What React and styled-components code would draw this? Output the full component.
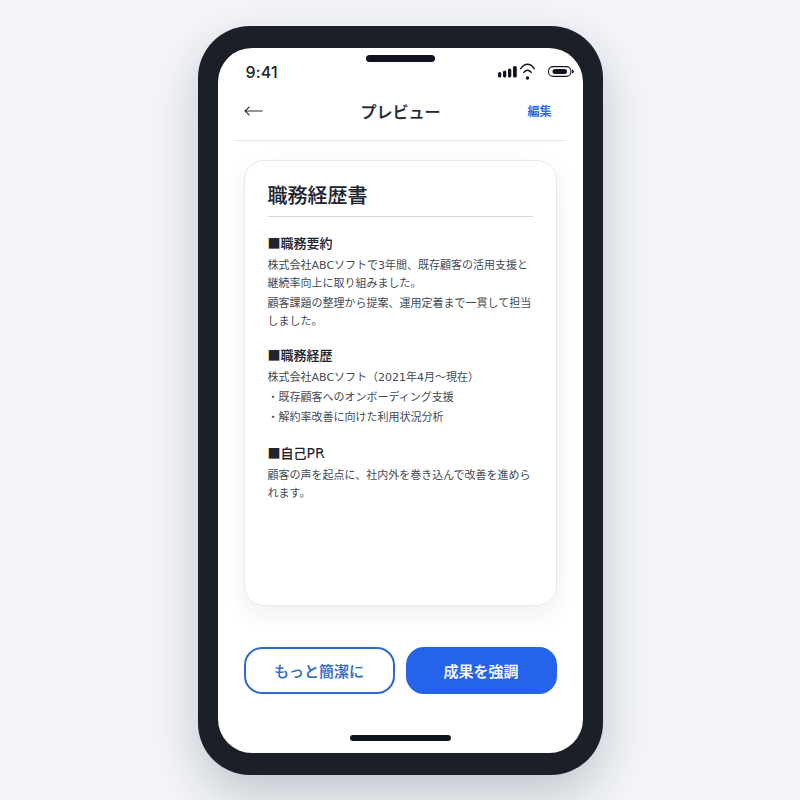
import React from 'react';
import styled, { createGlobalStyle } from 'styled-components';

const GlobalStyle = createGlobalStyle`
  html, body {
    margin: 0;
    padding: 0;
    height: 100%;
  }
  body {
    background: #f3f5f9;
    font-family: 'Noto Sans CJK JP', sans-serif;
    color: #1a1f29;
  }
  * { box-sizing: border-box; }
`;

const Page = styled.div`
  width: 800px;
  height: 800px;
  display: flex;
  align-items: center;
  justify-content: center;
  overflow: hidden;
`;

const Phone = styled.div`
  width: 405px;
  height: 749px;
  padding: 22px 20px;
  border-radius: 52px;
  background: #1b1f28;
  box-shadow: 0 20px 50px rgba(20, 28, 45, 0.22);
`;

const Screen = styled.div`
  position: relative;
  width: 100%;
  height: 100%;
  border-radius: 34px;
  background: #fff;
  overflow: hidden;
  display: flex;
  flex-direction: column;
`;

const Notch = styled.div`
  position: absolute;
  top: 7px;
  left: 148px;
  width: 69px;
  height: 7px;
  border-radius: 4px;
  background: #0f1420;
`;

const StatusBar = styled.div`
  height: 40px;
  padding: 8px 9px 0 28px;
  display: flex;
  justify-content: space-between;
  align-items: center;
`;

const Clock = styled.span`
  font-family: Inter, sans-serif;
  font-size: 16px;
  font-weight: 500;
  line-height: 20px;
  letter-spacing: 0.2px;
`;

const StatusIcons = styled.div`
  display: flex;
  align-items: center;
  gap: 3px;
`;

const BatterySlot = styled.span`
  display: flex;
  margin-left: 10px;
`;

const NavBar = styled.header`
  height: 53px;
  margin: 0 18px;
  padding: 0 7px 6px 8px;
  display: grid;
  grid-template-columns: 1fr auto 1fr;
  align-items: center;
  border-bottom: 1px solid #e2e5e9;
`;

const BackArrow = styled.svg`
  width: 20px;
  height: 12px;
  flex: none;
`;

const NavTitle = styled.h1`
  margin: 0;
  font-size: 16px;
  font-weight: 500;
  line-height: 24px;
  color: #1f2530;
  -webkit-text-stroke: 0.25px #1f2530;
`;

const EditLink = styled.span`
  justify-self: end;
  margin-right: 6px;
  font-size: 12px;
  font-weight: 500;
  color: #2563eb;
  -webkit-text-stroke: 0.15px #2563eb;
`;

const Body = styled.main`
  flex: 1;
  padding: 19px 26px 0;
  display: flex;
  flex-direction: column;
`;

const Card = styled.article`
  height: 446px;
  padding: 19px 23px;
  border: 1px solid #e6e8ec;
  border-radius: 20px;
  background: #fff;
  box-shadow: 0 8px 24px rgba(20, 28, 45, 0.07);
`;

const DocTitle = styled.h2`
  margin: 0 0 16px;
  padding-bottom: 6px;
  border-bottom: 1px solid #d5d8dd;
  font-size: 20px;
  font-weight: 500;
  line-height: 30px;
  color: #1f2530;
  -webkit-text-stroke: 0.12px #1f2530;
`;

const Section = styled.section`
  margin-bottom: ${(p) => p.$gap}px;
`;

const SectionTitle = styled.h3`
  margin: 0 0 4px;
  font-size: 13px;
  font-weight: 500;
  line-height: 20px;
  color: #1f2530;
  -webkit-text-stroke: 0.1px #1f2530;
`;

const Latin = styled.span`
  font-family: 'DejaVu Sans', sans-serif;
  font-size: 14px;
  font-weight: 400;
`;

const Line = styled.p`
  margin: 0 0 2px;
  font-family: 'DejaVu Sans', 'Noto Sans CJK JP', sans-serif;
  font-size: 11px;
  line-height: 18px;
  color: #444a54;
`;

const Actions = styled.div`
  margin-top: 41px;
  display: grid;
  grid-template-columns: 1fr 1fr;
  gap: 11px;
`;

const ActionButton = styled.button`
  height: 47px;
  padding: 0;
  border-radius: 18px;
  border: 2px solid #2563c9;
  background: ${(p) => (p.$primary ? '#2563eb' : '#fff')};
  border-color: ${(p) => (p.$primary ? '#2563eb' : '#2f69c9')};
  color: ${(p) => (p.$primary ? '#fff' : '#2f69c9')};
  font-family: inherit;
  font-size: 15px;
  font-weight: 500;
  -webkit-text-stroke: 0.15px ${(p) => (p.$primary ? '#fff' : '#2f69c9')};
`;

const HomeIndicator = styled.div`
  position: absolute;
  left: 132px;
  bottom: 12px;
  width: 101px;
  height: 6px;
  border-radius: 3px;
  background: #0f1420;
`;

const SignalIcon = () => (
  <svg width="19" height="12" viewBox="0 0 19 12">
    <rect x="0" y="6" width="3.3" height="5.5" rx="1.6" fill="#0f1420" />
    <rect x="5" y="4.5" width="3.3" height="7" rx="1.6" fill="#0f1420" />
    <rect x="10" y="2.5" width="3.3" height="9" rx="1.6" fill="#0f1420" />
    <rect x="15" y="0" width="3.8" height="11.5" rx="1.6" fill="#0f1420" />
  </svg>
);

const WifiIcon = () => (
  <svg width="15" height="17" viewBox="0 0 15 17" fill="none">
    <path d="M0.8 5.6C4.4 -0.2 10.6 -0.2 14.2 5.6" stroke="#0f1420" strokeWidth="1.5" strokeLinecap="round" />
    <path d="M3.9 9.4C6 6.5 9 6.5 11.1 9.4" stroke="#0f1420" strokeWidth="1.5" strokeLinecap="round" />
    <circle cx="7.5" cy="15" r="1.7" fill="#0f1420" />
  </svg>
);

const BatteryIcon = () => (
  <svg width="26" height="11" viewBox="0 0 26 11" fill="none">
    <rect x="0.6" y="0.6" width="22.3" height="9.8" rx="4.4" stroke="#0f1420" strokeWidth="1.1" />
    <rect x="4.5" y="3" width="14.5" height="5" rx="2.5" fill="#0f1420" />
    <path d="M24 3.5C25.4 4 25.9 4.7 25.9 5.5C25.9 6.3 25.4 7 24 7.5Z" fill="#0f1420" />
  </svg>
);

const App = () => {
  return (
    <>
      <GlobalStyle />
      <Page>
        <Phone>
          <Screen>
            <Notch />
            <StatusBar>
              <Clock>9:41</Clock>
              <StatusIcons>
                <SignalIcon />
                <WifiIcon />
                <BatterySlot>
                  <BatteryIcon />
                </BatterySlot>
              </StatusIcons>
            </StatusBar>
            <NavBar>
              <BackArrow viewBox="0 0 20 12" fill="none">
                <path d="M18.5 6H1M5.6 1.6L1 6L5.6 10.4" stroke="#2a2f39" strokeWidth="1.1" />
              </BackArrow>
              <NavTitle>プレビュー</NavTitle>
              <EditLink>編集</EditLink>
            </NavBar>
            <Body>
              <Card>
                <DocTitle>職務経歴書</DocTitle>
                <Section $gap={14}>
                  <SectionTitle>■職務要約</SectionTitle>
                  <Line>株式会社ABCソフトで3年間、既存顧客の活用支援と継続率向上に取り組みました。</Line>
                  <Line>顧客課題の整理から提案、運用定着まで一貫して担当しました。</Line>
                </Section>
                <Section $gap={16}>
                  <SectionTitle>■職務経歴</SectionTitle>
                  <Line>株式会社ABCソフト（2021年4月〜現在）</Line>
                  <Line>・既存顧客へのオンボーディング支援</Line>
                  <Line>・解約率改善に向けた利用状況分析</Line>
                </Section>
                <Section $gap={0}>
                  <SectionTitle>■自己<Latin>PR</Latin></SectionTitle>
                  <Line>顧客の声を起点に、社内外を巻き込んで改善を進められます。</Line>
                </Section>
              </Card>
              <Actions>
                <ActionButton>もっと簡潔に</ActionButton>
                <ActionButton $primary>成果を強調</ActionButton>
              </Actions>
            </Body>
            <HomeIndicator />
          </Screen>
        </Phone>
      </Page>
    </>
  );
};

export default App;
